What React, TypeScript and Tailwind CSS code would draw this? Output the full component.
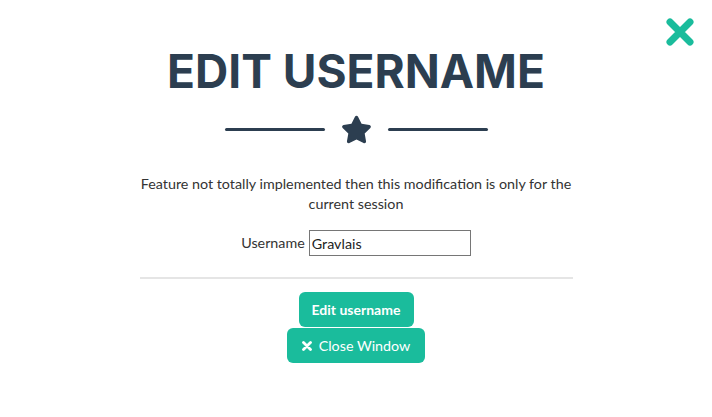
import React from "react";

export default function App() {
  return (
    <div className="relative w-[712px] h-[417px] bg-white overflow-hidden font-['Lato',sans-serif] text-[#333]">
      <div className="absolute left-[665px] top-[17px] w-[30px] h-[30px]">
        <svg viewBox="0 0 30 30" width="30" height="30">
          <path d="M5 5 L25 25 M25 5 L5 25" stroke="#1abc9c" strokeWidth="7" strokeLinecap="round" fill="none" />
        </svg>
      </div>
      <div className="flex flex-col items-center pt-[45px]">
        <h2 className="font-['Inter',sans-serif] font-bold text-[46px] leading-[52px] text-[#2c3e50] m-0">
          EDIT USERNAME
        </h2>
        <div className="flex items-center mt-[17px]">
          <div className="w-[100px] h-[3px] bg-[#2c3e50] rounded-full" />
          <div className="mx-[16px] w-[31px] h-[30px] flex items-center justify-center">
            <svg viewBox="0 0 576 512" width="32" height="29">
              <path
                fill="#2c3e50"
                d="M259.3 17.8L194 150.2 47.9 171.5c-26.2 3.8-36.7 36.1-17.7 54.6l105.7 103-25 145.5c-4.5 26.3 23.2 46 46.4 33.7L288 439.6l130.7 68.7c23.2 12.2 50.9-7.4 46.4-33.7l-25-145.5 105.7-103c19-18.5 8.5-50.8-17.7-54.6L382 150.2 316.7 17.8c-11.7-23.6-45.6-23.9-57.4 0z"
              />
            </svg>
          </div>
          <div className="w-[100px] h-[3px] bg-[#2c3e50] rounded-full" />
        </div>
        <p className="w-[440px] text-center text-[14.3px] leading-[20px] mt-[30px]">
          Feature not totally implemented then this modification is only for the current session
        </p>
        <div className="flex items-center mt-[16px] text-[14.3px]">
          <span className="mr-[4px]">Username</span>
          <input
            defaultValue="Gravlais"
            className="w-[162px] h-[26px] border border-[#767676] px-[2px] text-[14.3px] text-[#222] outline-none font-['Lato',sans-serif]"
          />
        </div>
        <div className="w-[433px] h-[2px] bg-[#e5e5e5] mt-[21px]" />
        <button className="mt-[13px] w-[115px] h-[35px] rounded-[6px] bg-[#1abc9c] text-white font-bold text-[14px]">
          Edit username
        </button>
        <button className="mt-[1px] w-[138px] h-[35px] rounded-[6px] bg-[#1abc9c] text-white text-[14.3px] flex items-center justify-center gap-[7px]">
          <svg viewBox="0 0 10 10" width="10" height="10">
            <path d="M1.5 1.5 L8.5 8.5 M8.5 1.5 L1.5 8.5" stroke="white" strokeWidth="2.8" strokeLinecap="round" />
          </svg>
          <span>Close Window</span>
        </button>
      </div>
    </div>
  );
}
